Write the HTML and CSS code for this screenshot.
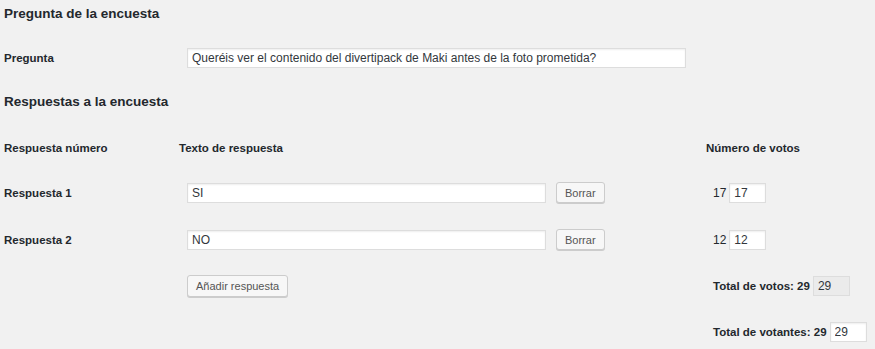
FILE: index.html
```html
<!DOCTYPE html>
<html lang="es">
<head>
    <meta charset="UTF-8">
    <title>Encuesta</title>
    <link rel="stylesheet" href="styles.css">
</head>
<body>
    <h2 class="section-title">Pregunta de la encuesta</h2>

    <div class="question-row">
        <label for="question" class="row-label">Pregunta</label>
        <input type="text" id="question" class="question-input" value="Queréis ver el contenido del divertipack de Maki antes de la foto prometida?">
    </div>

    <h2 class="section-title">Respuestas a la encuesta</h2>

    <div class="answers">
        <div class="head">Respuesta número</div>
        <div class="head">Texto de respuesta</div>
        <div class="head">Número de votos</div>

        <div class="row-label">Respuesta 1</div>
        <div class="answer-cell">
            <input type="text" class="answer-input" value="SI">
            <button class="button">Borrar</button>
        </div>
        <div class="votes-cell">17 <input type="text" class="votes-input" value="17"></div>

        <div class="row-label">Respuesta 2</div>
        <div class="answer-cell">
            <input type="text" class="answer-input" value="NO">
            <button class="button">Borrar</button>
        </div>
        <div class="votes-cell">12 <input type="text" class="votes-input" value="12"></div>

        <div></div>
        <div class="answer-cell">
            <button class="button add-button">Añadir respuesta</button>
        </div>
        <div class="votes-cell total">Total de votos: 29 <input type="text" class="votes-input" value="29" readonly></div>

        <div></div>
        <div></div>
        <div class="votes-cell total">Total de votantes: 29 <input type="text" class="votes-input" value="29"></div>
    </div>
</body>
</html>
```

FILE: styles.css
```css
body {
    font-family: 'Liberation Sans', Arial, sans-serif;
    font-size: 12px;
    margin: 0;
    padding: 4px 4px 0;
    background-color: #f1f1f1;
    color: #23282d;
}

.section-title {
    font-size: 13.5px;
    font-weight: bold;
    line-height: 20px;
    height: 20px;
    margin: 0;
}

.question-row {
    display: flex;
    align-items: center;
    height: 20px;
    margin: 24px 0;
}

.row-label,
.head {
    font-size: 11.5px;
    font-weight: bold;
}

.question-row .row-label {
    width: 183px;
}

input[type="text"] {
    box-sizing: border-box;
    height: 20px;
    padding: 0 4px;
    border: 1px solid #ddd;
    background-color: #fff;
    box-shadow: inset 0 1px 2px rgba(0, 0, 0, 0.07);
    font-family: inherit;
    font-size: 12px;
    color: #32373c;
    outline: none;
}

.question-input {
    width: 499px;
}

.answers {
    display: grid;
    grid-template-columns: 175px 527px 1fr;
    grid-template-rows: 43px 47px 47px 46px 46px;
    align-items: center;
    margin-top: 14px;
}

.answer-cell {
    display: flex;
    align-items: center;
    gap: 10px;
    padding-left: 8px;
}

.answer-input {
    width: 359px;
}

.button {
    box-sizing: border-box;
    height: 21px;
    padding: 0 8px;
    border: 1px solid #ccc;
    border-radius: 3px;
    background-color: #f7f7f7;
    box-shadow: 0 1px 0 #ccc;
    font-family: inherit;
    font-size: 11px;
    color: #555;
    cursor: pointer;
}

.add-button {
    height: 22px;
}

.votes-cell {
    display: flex;
    align-items: center;
    gap: 3px;
    padding-left: 7px;
    white-space: nowrap;
}

.votes-cell.total {
    font-size: 11.5px;
    font-weight: bold;
}

.votes-input {
    width: 37px;
    font-weight: normal;
}

.votes-input[readonly] {
    background-color: #ebebeb;
    box-shadow: none;
}
```
